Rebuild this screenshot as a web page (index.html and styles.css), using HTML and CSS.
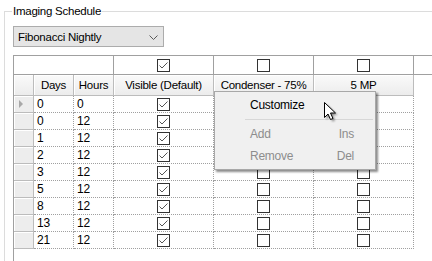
FILE: index.html
```html
<!DOCTYPE html>
<html>
<head>
  <title>Imaging Schedule</title>
  <link rel="stylesheet" href="styles.css">
</head>
<body>
  <fieldset class="group">
    <legend>Imaging Schedule</legend>

    <div class="combo">
      <span>Fibonacci Nightly</span>
      <svg class="chev" width="9" height="5" viewBox="0 0 9 5"><path d="M0.5 0.5 L4.5 4.5 L8.5 0.5" fill="none" stroke="#5a5a5a"/></svg>
    </div>

    <div class="grid-wrap">
      <div class="grid" id="grid">
        <div class="top corner"></div>
        <div class="top chk"><span class="box checked"></span></div>
        <div class="top chk"><span class="box"></span></div>
        <div class="top chk"><span class="box"></span></div>
        <div class="top fill"></div>

        <div class="hdr"></div>
        <div class="hdr">Days</div>
        <div class="hdr">Hours</div>
        <div class="hdr">Visible (Default)</div>
        <div class="hdr">Condenser - 75%</div>
        <div class="hdr">5 MP</div>
        <div class="blank"></div>
      </div>

      <div class="menu">
        <div class="item">Customize</div>
        <div class="sep"></div>
        <div class="item off"><span>Add</span><span class="key">Ins</span></div>
        <div class="item off"><span>Remove</span><span class="key">Del</span></div>
      </div>

      <svg class="cursor" width="16" height="22" viewBox="0 0 16 22">
        <defs>
          <filter id="blur"><feGaussianBlur stdDeviation="1.1"/></filter>
        </defs>
        <path d="M2.5 2.5 L2.5 17.5 L6 14 L8.5 19.5 L11 18.5 L8.5 13 L13.5 13 Z" fill="#000" opacity="0.45" filter="url(#blur)"/>
        <path d="M0.5 0.5 L0.5 15.5 L4 12 L6.5 17.5 L9 16.5 L6.5 11 L11.5 11 Z" fill="#fff" stroke="#000" stroke-linejoin="round"/>
      </svg>
    </div>
  </fieldset>

  <script>
    var rows = [["0", "0"], ["0", "12"], ["1", "12"], ["2", "12"], ["3", "12"],
                ["5", "12"], ["8", "12"], ["13", "12"], ["21", "12"]];
    var grid = document.getElementById("grid");

    function addCell(cls, html) {
      var cell = document.createElement("div");
      cell.className = cls;
      cell.innerHTML = html;
      grid.appendChild(cell);
    }

    for (var i = 0; i < rows.length; i++) {
      addCell("rowhdr", i === 0 ? '<span class="arrow"></span>' : "");
      addCell("cell", rows[i][0]);
      addCell("cell", rows[i][1]);
      addCell("cell mid", '<span class="box checked"></span>');
      addCell("cell mid", '<span class="box"></span>');
      addCell("cell mid", '<span class="box"></span>');
      addCell("blank", "");
    }

    var ticks = document.querySelectorAll(".box.checked");
    for (var j = 0; j < ticks.length; j++) {
      ticks[j].innerHTML = '<svg width="11" height="11" viewBox="0 0 11 11"><path d="M1.5 5.5 L4 8 L9.5 2.5" fill="none" stroke="#555"/></svg>';
    }
  </script>
</body>
</html>
```

FILE: styles.css
```css
* {
  margin: 0;
  padding: 0;
  box-sizing: border-box;
}

html,
body {
  overflow: hidden;
}

body {
  background: #ffffff;
  font-family: "Liberation Sans", Arial, sans-serif;
  font-size: 11.5px;
  letter-spacing: -0.25px;
  color: #000000;
  width: 432px;
  height: 261px;
}

.group {
  margin: 4px 0 0 4px;
  width: 428px;
  height: 257px;
  border: 1px solid #dcdcdc;
  border-right: none;
  border-bottom: none;
  padding: 0 0 0 7px;
  min-width: 0;
}

.group legend {
  padding: 0 1px;
  line-height: 15px;
  color: #000000;
}

.combo {
  margin: 7px 0 0 1px;
  width: 151px;
  height: 21px;
  border: 1px solid #acacac;
  background: #e5e5e5;
  display: flex;
  align-items: center;
  justify-content: space-between;
  padding: 0 5px 0 4px;
}

.chev {
  display: block;
  margin-top: 1px;
}

.grid-wrap {
  position: relative;
  margin: 8px 0 0 1px;
}

.grid {
  display: grid;
  grid-template-columns: 20px 40px 40px 100px 100px 100px 1fr;
  grid-template-rows: 19px 21px;
  grid-auto-rows: 17px;
  border-left: 1px solid #a0a0a0;
  border-top: 1px solid #a0a0a0;
  height: 206px;
}

.top {
  border-bottom: 1px solid #a0a0a0;
  display: flex;
  align-items: center;
  justify-content: center;
}

.corner {
  grid-column: span 3;
  border-right: 1px solid #a0a0a0;
}

.chk {
  border-right: 1px solid #a0a0a0;
}

.hdr,
.rowhdr {
  background: linear-gradient(#fafafa, #ececec);
  box-shadow: inset 1px 1px #ffffff;
  border-right: 1px solid #bcbcbc;
  border-bottom: 1px solid #bcbcbc;
  display: flex;
  align-items: center;
  justify-content: center;
}

.rowhdr {
  background: #ededed;
  justify-content: flex-start;
  padding-left: 5px;
}

.arrow {
  width: 0;
  height: 0;
  border-top: 4px solid transparent;
  border-bottom: 4px solid transparent;
  border-left: 4px solid #a8a8a8;
}

.cell {
  border-right: 1px dotted #a0a0a0;
  border-bottom: 1px dotted #a0a0a0;
  padding-left: 3px;
  line-height: 16px;
  font-size: 12px;
}

.cell.mid {
  padding-left: 0;
  display: flex;
  align-items: center;
  justify-content: center;
}

.box {
  display: block;
  width: 13px;
  height: 13px;
  border: 1px solid #333333;
  background: #ffffff;
}

.box svg {
  display: block;
}

.menu {
  position: absolute;
  left: 201px;
  top: 36px;
  width: 162px;
  height: 79px;
  background: #f0f0f0;
  border: 1px solid #a8a8a8;
  box-shadow: 2px 2px 2px rgba(0, 0, 0, 0.45);
  padding: 2px 0;
}

.menu .item {
  height: 22px;
  display: flex;
  align-items: center;
  justify-content: space-between;
  padding: 0 21px 0 35px;
  font-size: 12px;
}

.menu .off {
  color: #8d8d8d;
}

.menu .sep {
  height: 1px;
  margin: 3px 2px 3px 30px;
  background: #d7d7d7;
}

.cursor {
  position: absolute;
  left: 311px;
  top: 47px;
}
```
